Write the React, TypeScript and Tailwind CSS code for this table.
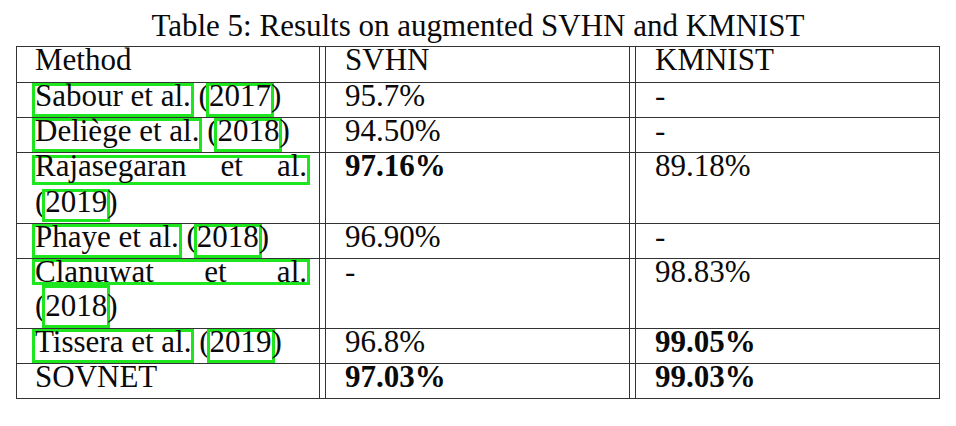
import React from 'react';

const grid = 'grid grid-cols-[303px_6px_304px_6px_304px] border-b border-[#333]';

function Box({ children }: { children: React.ReactNode }) {
  return (
    <span className="inline-block box-border h-[34px] -mx-[3px] border-[3px] border-[#1ee61e] leading-[20px]">
      {children}
    </span>
  );
}

function Cite({ author, year }: { author: string; year: string }) {
  return (
    <div className="h-[34px] leading-[26px] whitespace-nowrap">
      <Box>{author}</Box> (<Box>{year}</Box>)
    </div>
  );
}

function Val({ v, bold }: { v: string; bold?: boolean }) {
  return <div className={bold ? 'h-[34px] leading-[26px] font-bold' : 'h-[34px] leading-[26px]'}>{v}</div>;
}

// the two citations that wrap onto a second line; first line justified to the column edge
const rajasegaran = (
  <>
    <div className="h-[36px] pt-[2px]">
      <span className="block box-border h-[30px] -mx-[3px] border-[3px] border-[#1ee61e] leading-[16px] text-justify [text-align-last:justify]">
        Rajasegaran et al.
      </span>
    </div>
    <div className="h-[34px] leading-[26px] whitespace-nowrap">
      (<span className="inline-block box-border h-[33px] -mx-[3px] border-[3px] border-[#1ee61e] leading-[20px]">2019</span>)
    </div>
  </>
);

const clanuwat = (
  <>
    <div className="h-[26px]">
      <span className="block box-border h-[26px] -mx-[3px] border-[3px] border-[#1ee61e] leading-[20px] text-justify [text-align-last:justify]">
        Clanuwat et al.
      </span>
    </div>
    <div className="h-[43px] leading-[42px] whitespace-nowrap">
      (<span className="inline-block box-border h-[43px] -mx-[3px] border-[3px] border-[#1ee61e] leading-[36px]">2018</span>)
    </div>
  </>
);

type Row = { method: React.ReactNode; svhn: string; km: string; bs?: boolean; bk?: boolean };

const rows: Row[] = [
  { method: <Cite author="Sabour et al." year="2017" />, svhn: '95.7%', km: '-' },
  { method: <Cite author="Deliège et al." year="2018" />, svhn: '94.50%', km: '-' },
  { method: rajasegaran, svhn: '97.16%', km: '89.18%', bs: true },
  { method: <Cite author="Phaye et al." year="2018" />, svhn: '96.90%', km: '-' },
  { method: clanuwat, svhn: '-', km: '98.83%' },
  { method: <Cite author="Tissera et al." year="2019" />, svhn: '96.8%', km: '99.05%', bk: true },
  { method: <div className="h-[34px] leading-[26px]">SOVNET</div>, svhn: '97.03%', km: '99.03%', bs: true, bk: true },
];

export default function App() {
  return (
    <div className="min-h-screen bg-white pl-[16px] pt-[13px] font-['Liberation_Serif',serif] text-[31px] text-[#0a0a0a]">
      <div className="w-[924px] text-center leading-[26px] mb-[7px]">Table 5: Results on augmented SVHN and KMNIST</div>

      <div className="w-[924px] border-l border-t border-[#333]">
        <div className={grid}>
          <div className="border-r border-[#333] pl-[18px] pr-[12px] h-[35px] leading-[26px]">Method</div>
          <div className="border-r border-[#333]" />
          <div className="border-r border-[#333] pl-[19px] h-[35px] leading-[26px]">SVHN</div>
          <div className="border-r border-[#333]" />
          <div className="border-r border-[#333] pl-[19px] h-[35px] leading-[26px]">KMNIST</div>
        </div>
        {rows.map((r, i) => (
          <div key={i} className={grid}>
            <div className="border-r border-[#333] pl-[18px] pr-[12px]">{r.method}</div>
            <div className="border-r border-[#333]" />
            <div className="border-r border-[#333] pl-[19px]">
              <Val v={r.svhn} bold={r.bs} />
            </div>
            <div className="border-r border-[#333]" />
            <div className="border-r border-[#333] pl-[19px]">
              <Val v={r.km} bold={r.bk} />
            </div>
          </div>
        ))}
      </div>
    </div>
  );
}
